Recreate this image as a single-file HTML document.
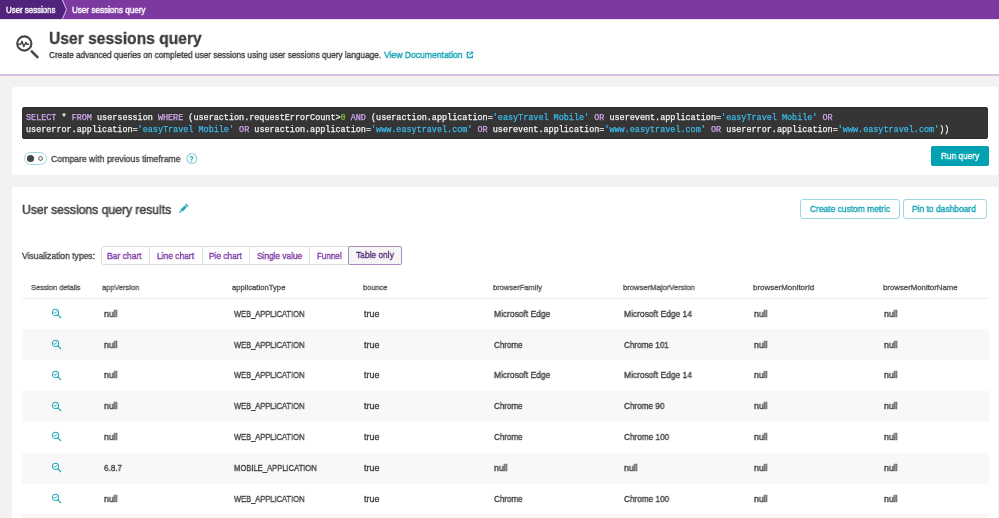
<!DOCTYPE html>
<html><head><meta charset="utf-8"><style>
html,body{margin:0;padding:0;}
body{width:999px;height:518px;overflow:hidden;position:relative;background:#f2f2f2;font-family:"Liberation Sans",sans-serif;}
.t{position:absolute;white-space:nowrap;transform-origin:0 0;will-change:transform;}
.m{position:absolute;white-space:pre;will-change:transform;font-family:"Liberation Mono",monospace;-webkit-text-stroke:0.25px currentColor;}
.b{position:absolute;}
</style></head><body>
<div class="b" style="left:0px;top:0px;width:999px;height:19px;background:#7c3aa0;"></div>
<svg class="b" style="left:0;top:0" width="80" height="19"><polygon points="0,0 62,0 66.5,9.5 62,19 0,19" fill="#52237a"/><polyline points="62,-1 66.5,9.5 62,20" fill="none" stroke="#d9c6e6" stroke-width="1"/></svg>
<div class="b" style="left:0px;top:19px;width:999px;height:55px;background:#fff;"></div>
<div class="b" style="left:0px;top:74px;width:999px;height:1.5px;background:#d9c3e3;"></div>
<div class="b" style="left:0px;top:19px;width:999px;height:1px;background:#ece3f2;"></div>
<div class="t" style="left:6.00px;top:3px;font-size:9.45px;line-height:14px;color:#fff;-webkit-text-stroke:0.45px #fff;transform:scaleX(0.8344);">User sessions</div>
<div class="t" style="left:71.50px;top:3px;font-size:9.45px;line-height:14px;color:#fff;-webkit-text-stroke:0.45px #fff;transform:scaleX(0.8588);">User sessions query</div>
<svg class="b" style="left:0;top:20px" width="50" height="50" viewBox="0 20 50 50">
<circle cx="24.3" cy="43.5" r="7.1" fill="none" stroke="#454646" stroke-width="2.1"/>
<polyline points="18.6,44.2 20.6,44.2 22,41.2 23.8,46.5 26,42.4 27,44.3 28.6,44.3" fill="none" stroke="#454646" stroke-width="1.45" stroke-linejoin="round" stroke-linecap="round"/>
<line x1="31" y1="50.6" x2="38.2" y2="57.8" stroke="#454646" stroke-width="2.5"/>
</svg>
<div class="t" style="left:48.60px;top:28px;font-size:16.86px;line-height:21px;color:#3b3b3b;font-weight:700;-webkit-text-stroke:0.3px #3b3b3b;transform:scaleX(0.9258);">User sessions query</div>
<div class="t" style="left:48.60px;top:48px;font-size:9.59px;line-height:14px;color:#3f3f3f;-webkit-text-stroke:0.4px #3f3f3f;transform:scaleX(0.8589);">Create advanced queries on completed user sessions using user sessions query language.</div>
<div class="t" style="left:384.30px;top:48px;font-size:9.59px;line-height:14px;color:#12a2b4;-webkit-text-stroke:0.4px #12a2b4;transform:scaleX(0.8963);">View Documentation</div>
<svg class="b" style="left:460px;top:46px" width="20" height="18" viewBox="460 46 20 18">
<path d="M469.6 52.4 H467.3 V57.5 H472.4 V55.2" fill="none" stroke="#1ea6b9" stroke-width="1.3"/>
<polygon points="470.2,51.6 473.2,51.6 473.2,54.6" fill="#1ea6b9"/>
<line x1="469.4" y1="55" x2="472" y2="52.4" stroke="#1ea6b9" stroke-width="1.2"/>
</svg>
<div class="b" style="left:12px;top:87px;width:986px;height:88px;background:#fff;border-radius:2px;"></div>
<div class="b" style="left:22px;top:106.8px;width:966.2px;height:32.2px;background:#353535;border:1px solid #2d2d2d;box-sizing:border-box;border-radius:2px;"></div>
<div class="m" style="left:25.6px;top:112.00px;font-size:8.465px;line-height:12px;"><span style="color:#cfa6ee;-webkit-text-stroke-color:#cfa6ee">SELECT</span><span style="color:#f2f2f2;-webkit-text-stroke-color:#f2f2f2"> * </span><span style="color:#cfa6ee;-webkit-text-stroke-color:#cfa6ee">FROM</span><span style="color:#f2f2f2;-webkit-text-stroke-color:#f2f2f2"> usersession </span><span style="color:#cfa6ee;-webkit-text-stroke-color:#cfa6ee">WHERE</span><span style="color:#f2f2f2;-webkit-text-stroke-color:#f2f2f2"> (useraction.requestErrorCount&gt;</span><span style="color:#7dc540;-webkit-text-stroke-color:#7dc540">0</span><span style="color:#f2f2f2;-webkit-text-stroke-color:#f2f2f2"> </span><span style="color:#cfa6ee;-webkit-text-stroke-color:#cfa6ee">AND</span><span style="color:#f2f2f2;-webkit-text-stroke-color:#f2f2f2"> (useraction.application=</span><span style="color:#3cb8ea;-webkit-text-stroke-color:#3cb8ea">'easyTravel Mobile'</span><span style="color:#f2f2f2;-webkit-text-stroke-color:#f2f2f2"> </span><span style="color:#cfa6ee;-webkit-text-stroke-color:#cfa6ee">OR</span><span style="color:#f2f2f2;-webkit-text-stroke-color:#f2f2f2"> userevent.application=</span><span style="color:#3cb8ea;-webkit-text-stroke-color:#3cb8ea">'easyTravel Mobile'</span><span style="color:#f2f2f2;-webkit-text-stroke-color:#f2f2f2"> </span><span style="color:#cfa6ee;-webkit-text-stroke-color:#cfa6ee">OR</span></div>
<div class="m" style="left:25.6px;top:124.00px;font-size:8.465px;line-height:12px;"><span style="color:#f2f2f2;-webkit-text-stroke-color:#f2f2f2">usererror.application=</span><span style="color:#3cb8ea;-webkit-text-stroke-color:#3cb8ea">'easyTravel Mobile'</span><span style="color:#f2f2f2;-webkit-text-stroke-color:#f2f2f2"> </span><span style="color:#cfa6ee;-webkit-text-stroke-color:#cfa6ee">OR</span><span style="color:#f2f2f2;-webkit-text-stroke-color:#f2f2f2"> useraction.application=</span><span style="color:#3cb8ea;-webkit-text-stroke-color:#3cb8ea">'www.easytravel.com'</span><span style="color:#f2f2f2;-webkit-text-stroke-color:#f2f2f2"> </span><span style="color:#cfa6ee;-webkit-text-stroke-color:#cfa6ee">OR</span><span style="color:#f2f2f2;-webkit-text-stroke-color:#f2f2f2"> userevent.application=</span><span style="color:#3cb8ea;-webkit-text-stroke-color:#3cb8ea">'www.easytravel.com'</span><span style="color:#f2f2f2;-webkit-text-stroke-color:#f2f2f2"> </span><span style="color:#cfa6ee;-webkit-text-stroke-color:#cfa6ee">OR</span><span style="color:#f2f2f2;-webkit-text-stroke-color:#f2f2f2"> usererror.application=</span><span style="color:#3cb8ea;-webkit-text-stroke-color:#3cb8ea">'www.easytravel.com'</span><span style="color:#f2f2f2;-webkit-text-stroke-color:#f2f2f2">))</span></div>
<svg class="b" style="left:23px;top:151px" width="25" height="15" viewBox="0 0 25 15">
<rect x="1.5" y="1.5" width="22" height="12" rx="6" fill="#fff" stroke="#9bd8e0" stroke-width="1"/>
<circle cx="7.5" cy="7.5" r="3.6" fill="#454646"/>
<circle cx="17.6" cy="7.5" r="1.9" fill="none" stroke="#454646" stroke-width="0.9"/>
</svg>
<div class="t" style="left:51.00px;top:152px;font-size:9.30px;line-height:14px;color:#454646;-webkit-text-stroke:0.35px #454646;transform:scaleX(0.9320);">Compare with previous timeframe</div>
<svg class="b" style="left:185px;top:152px" width="14" height="14" viewBox="0 0 14 14">
<circle cx="6.8" cy="6.6" r="4.9" fill="#fff" stroke="#8fd2dc" stroke-width="1.2"/>
</svg>
<div class="t" style="left:189.30px;top:152px;font-size:9.30px;line-height:14px;color:#12a2b4;font-weight:700;transform:scaleX(0.8448);">?</div>
<div class="b" style="left:931px;top:146px;width:58px;height:20px;background:#00a1b2;border-radius:2px;"></div>
<div class="t" style="left:940.80px;top:149px;font-size:9.16px;line-height:14px;color:#fff;-webkit-text-stroke:0.35px #fff;transform:scaleX(0.9042);">Run query</div>
<div class="b" style="left:12px;top:187px;width:986px;height:353px;background:#fff;border-radius:2px;"></div>
<div class="t" style="left:22.40px;top:202px;font-size:12.65px;line-height:17px;color:#454646;-webkit-text-stroke:0.55px #454646;transform:scaleX(0.9607);">User sessions query results</div>
<svg class="b" style="left:170px;top:195px" width="25" height="25" viewBox="170 195 25 25">
<g transform="translate(179.2,212.8) rotate(-44.5)" fill="#1ea6b9">
<polygon points="0,0 2.2,-1.4 2.2,1.4"/>
<rect x="2.9" y="-1.4" width="6.2" height="2.8"/>
<rect x="9.8" y="-1.4" width="1.7" height="2.8"/>
</g>
</svg>
<div class="b" style="left:800px;top:199px;width:100px;height:20px;background:#fff;border:1px solid #9bd8e0;border-radius:3px;box-sizing:border-box;"></div>
<div class="b" style="left:903px;top:199px;width:83.5px;height:20px;background:#fff;border:1px solid #9bd8e0;border-radius:3px;box-sizing:border-box;"></div>
<div class="t" style="left:809.90px;top:202px;font-size:9.16px;line-height:14px;color:#12a2b4;-webkit-text-stroke:0.35px #12a2b4;transform:scaleX(0.9206);">Create custom metric</div>
<div class="t" style="left:912.40px;top:202px;font-size:9.16px;line-height:14px;color:#12a2b4;-webkit-text-stroke:0.35px #12a2b4;transform:scaleX(0.9216);">Pin to dashboard</div>
<div class="t" style="left:22.00px;top:249px;font-size:9.16px;line-height:14px;color:#454646;-webkit-text-stroke:0.35px #454646;transform:scaleX(0.9333);">Visualization types:</div>
<div class="b" style="left:100.6px;top:245.5px;width:301.0px;height:19.100000000000023px;background:#fff;border:1px solid #dcdcdc;border-radius:3px;box-sizing:border-box;"></div>
<div class="b" style="left:149.4px;top:246px;width:1.0px;height:18.5px;background:#e2e2e2;"></div>
<div class="b" style="left:201.5px;top:246px;width:1.0px;height:18.5px;background:#e2e2e2;"></div>
<div class="b" style="left:249.4px;top:246px;width:1.0px;height:18.5px;background:#e2e2e2;"></div>
<div class="b" style="left:309.3px;top:246px;width:1.0px;height:18.5px;background:#e2e2e2;"></div>
<div class="b" style="left:348.2px;top:245.5px;width:53.400000000000034px;height:19.100000000000023px;background:#f5f5f5;border:1px solid #a98cc0;border-radius:2px;box-sizing:border-box;"></div>
<div class="t" style="left:107.40px;top:249px;font-size:9.16px;line-height:14px;color:#7c38a1;-webkit-text-stroke:0.35px #7c38a1;transform:scaleX(0.9314);">Bar chart</div>
<div class="t" style="left:156.60px;top:249px;font-size:9.16px;line-height:14px;color:#7c38a1;-webkit-text-stroke:0.35px #7c38a1;transform:scaleX(0.9202);">Line chart</div>
<div class="t" style="left:208.80px;top:249px;font-size:9.16px;line-height:14px;color:#7c38a1;-webkit-text-stroke:0.35px #7c38a1;transform:scaleX(0.9077);">Pie chart</div>
<div class="t" style="left:256.80px;top:249px;font-size:9.16px;line-height:14px;color:#7c38a1;-webkit-text-stroke:0.35px #7c38a1;transform:scaleX(0.9060);">Single value</div>
<div class="t" style="left:316.70px;top:249px;font-size:9.16px;line-height:14px;color:#7c38a1;-webkit-text-stroke:0.35px #7c38a1;transform:scaleX(0.8787);">Funnel</div>
<div class="t" style="left:356.30px;top:248px;font-size:9.16px;line-height:14px;color:#552a78;-webkit-text-stroke:0.35px #552a78;transform:scaleX(0.9168);">Table only</div>
<div class="t" style="left:31.00px;top:282px;font-size:7.70px;line-height:12px;color:#555555;-webkit-text-stroke:0.32px #555555;transform:scaleX(0.9573);">Session details</div>
<div class="t" style="left:101.90px;top:282px;font-size:7.70px;line-height:12px;color:#555555;-webkit-text-stroke:0.32px #555555;transform:scaleX(0.9651);">appVersion</div>
<div class="t" style="left:232.00px;top:282px;font-size:7.70px;line-height:12px;color:#555555;-webkit-text-stroke:0.32px #555555;transform:scaleX(0.9994);">applicationType</div>
<div class="t" style="left:362.60px;top:282px;font-size:7.70px;line-height:12px;color:#555555;-webkit-text-stroke:0.32px #555555;transform:scaleX(0.9655);">bounce</div>
<div class="t" style="left:492.70px;top:282px;font-size:7.70px;line-height:12px;color:#555555;-webkit-text-stroke:0.32px #555555;transform:scaleX(0.9785);">browserFamily</div>
<div class="t" style="left:622.80px;top:282px;font-size:7.70px;line-height:12px;color:#555555;-webkit-text-stroke:0.32px #555555;transform:scaleX(0.9924);">browserMajorVersion</div>
<div class="t" style="left:752.70px;top:282px;font-size:7.70px;line-height:12px;color:#555555;-webkit-text-stroke:0.32px #555555;transform:scaleX(1.0318);">browserMonitorId</div>
<div class="t" style="left:882.70px;top:282px;font-size:7.70px;line-height:12px;color:#555555;-webkit-text-stroke:0.32px #555555;transform:scaleX(1.0145);">browserMonitorName</div>
<div class="b" style="left:21.5px;top:298px;width:967.0px;height:1px;background:#eeeeee;"></div>
<div class="t" style="left:103.60px;top:308px;font-size:8.87px;line-height:13px;color:#404040;-webkit-text-stroke:0.35px #404040;transform:scaleX(0.9709);">null</div>
<div class="t" style="left:233.60px;top:308px;font-size:8.87px;line-height:13px;color:#404040;-webkit-text-stroke:0.35px #404040;transform:scaleX(0.8484);">WEB_APPLICATION</div>
<div class="t" style="left:363.60px;top:308px;font-size:8.87px;line-height:13px;color:#404040;-webkit-text-stroke:0.35px #404040;transform:scaleX(1.0081);">true</div>
<div class="t" style="left:493.70px;top:308px;font-size:8.87px;line-height:13px;color:#404040;-webkit-text-stroke:0.35px #404040;transform:scaleX(0.9505);">Microsoft Edge</div>
<div class="t" style="left:623.70px;top:308px;font-size:8.87px;line-height:13px;color:#404040;-webkit-text-stroke:0.35px #404040;transform:scaleX(0.9503);">Microsoft Edge 14</div>
<div class="t" style="left:753.80px;top:308px;font-size:8.87px;line-height:13px;color:#404040;-webkit-text-stroke:0.35px #404040;transform:scaleX(0.9709);">null</div>
<div class="t" style="left:883.50px;top:308px;font-size:8.87px;line-height:13px;color:#404040;-webkit-text-stroke:0.35px #404040;transform:scaleX(0.9709);">null</div>
<svg class="b" style="left:50px;top:307.00px" width="14" height="14" viewBox="0 0 14 14">
<circle cx="5.5" cy="5.4" r="3.1" fill="none" stroke="#22a8ba" stroke-width="1.05"/>
<polyline points="3.7,5.2 4.9,6.5 6.9,4.3" fill="none" stroke="#1ea6b9" stroke-width="0.95"/>
<line x1="7.7" y1="7.7" x2="11.1" y2="11.1" stroke="#1ea6b9" stroke-width="1.2"/>
</svg>
<div class="b" style="left:21.5px;top:329.35px;width:967.0px;height:30.849999999999966px;background:#f8f8f8;"></div>
<div class="t" style="left:103.60px;top:339px;font-size:8.87px;line-height:13px;color:#404040;-webkit-text-stroke:0.35px #404040;transform:scaleX(0.9709);">null</div>
<div class="t" style="left:233.60px;top:339px;font-size:8.87px;line-height:13px;color:#404040;-webkit-text-stroke:0.35px #404040;transform:scaleX(0.8484);">WEB_APPLICATION</div>
<div class="t" style="left:363.60px;top:339px;font-size:8.87px;line-height:13px;color:#404040;-webkit-text-stroke:0.35px #404040;transform:scaleX(1.0081);">true</div>
<div class="t" style="left:493.70px;top:339px;font-size:8.87px;line-height:13px;color:#404040;-webkit-text-stroke:0.35px #404040;transform:scaleX(0.9070);">Chrome</div>
<div class="t" style="left:623.70px;top:339px;font-size:8.87px;line-height:13px;color:#404040;-webkit-text-stroke:0.35px #404040;transform:scaleX(0.9203);">Chrome 101</div>
<div class="t" style="left:753.80px;top:339px;font-size:8.87px;line-height:13px;color:#404040;-webkit-text-stroke:0.35px #404040;transform:scaleX(0.9709);">null</div>
<div class="t" style="left:883.50px;top:339px;font-size:8.87px;line-height:13px;color:#404040;-webkit-text-stroke:0.35px #404040;transform:scaleX(0.9709);">null</div>
<svg class="b" style="left:50px;top:337.85px" width="14" height="14" viewBox="0 0 14 14">
<circle cx="5.5" cy="5.4" r="3.1" fill="none" stroke="#22a8ba" stroke-width="1.05"/>
<polyline points="3.7,5.2 4.9,6.5 6.9,4.3" fill="none" stroke="#1ea6b9" stroke-width="0.95"/>
<line x1="7.7" y1="7.7" x2="11.1" y2="11.1" stroke="#1ea6b9" stroke-width="1.2"/>
</svg>
<div class="t" style="left:103.60px;top:369px;font-size:8.87px;line-height:13px;color:#404040;-webkit-text-stroke:0.35px #404040;transform:scaleX(0.9709);">null</div>
<div class="t" style="left:233.60px;top:369px;font-size:8.87px;line-height:13px;color:#404040;-webkit-text-stroke:0.35px #404040;transform:scaleX(0.8484);">WEB_APPLICATION</div>
<div class="t" style="left:363.60px;top:369px;font-size:8.87px;line-height:13px;color:#404040;-webkit-text-stroke:0.35px #404040;transform:scaleX(1.0081);">true</div>
<div class="t" style="left:493.70px;top:369px;font-size:8.87px;line-height:13px;color:#404040;-webkit-text-stroke:0.35px #404040;transform:scaleX(0.9505);">Microsoft Edge</div>
<div class="t" style="left:623.70px;top:369px;font-size:8.87px;line-height:13px;color:#404040;-webkit-text-stroke:0.35px #404040;transform:scaleX(0.9503);">Microsoft Edge 14</div>
<div class="t" style="left:753.80px;top:369px;font-size:8.87px;line-height:13px;color:#404040;-webkit-text-stroke:0.35px #404040;transform:scaleX(0.9709);">null</div>
<div class="t" style="left:883.50px;top:369px;font-size:8.87px;line-height:13px;color:#404040;-webkit-text-stroke:0.35px #404040;transform:scaleX(0.9709);">null</div>
<svg class="b" style="left:50px;top:368.70px" width="14" height="14" viewBox="0 0 14 14">
<circle cx="5.5" cy="5.4" r="3.1" fill="none" stroke="#22a8ba" stroke-width="1.05"/>
<polyline points="3.7,5.2 4.9,6.5 6.9,4.3" fill="none" stroke="#1ea6b9" stroke-width="0.95"/>
<line x1="7.7" y1="7.7" x2="11.1" y2="11.1" stroke="#1ea6b9" stroke-width="1.2"/>
</svg>
<div class="b" style="left:21.5px;top:391.05px;width:967.0px;height:30.849999999999966px;background:#f8f8f8;"></div>
<div class="t" style="left:103.60px;top:400px;font-size:8.87px;line-height:13px;color:#404040;-webkit-text-stroke:0.35px #404040;transform:scaleX(0.9709);">null</div>
<div class="t" style="left:233.60px;top:400px;font-size:8.87px;line-height:13px;color:#404040;-webkit-text-stroke:0.35px #404040;transform:scaleX(0.8484);">WEB_APPLICATION</div>
<div class="t" style="left:363.60px;top:400px;font-size:8.87px;line-height:13px;color:#404040;-webkit-text-stroke:0.35px #404040;transform:scaleX(1.0081);">true</div>
<div class="t" style="left:493.70px;top:400px;font-size:8.87px;line-height:13px;color:#404040;-webkit-text-stroke:0.35px #404040;transform:scaleX(0.9070);">Chrome</div>
<div class="t" style="left:623.70px;top:400px;font-size:8.87px;line-height:13px;color:#404040;-webkit-text-stroke:0.35px #404040;transform:scaleX(0.9212);">Chrome 90</div>
<div class="t" style="left:753.80px;top:400px;font-size:8.87px;line-height:13px;color:#404040;-webkit-text-stroke:0.35px #404040;transform:scaleX(0.9709);">null</div>
<div class="t" style="left:883.50px;top:400px;font-size:8.87px;line-height:13px;color:#404040;-webkit-text-stroke:0.35px #404040;transform:scaleX(0.9709);">null</div>
<svg class="b" style="left:50px;top:399.55px" width="14" height="14" viewBox="0 0 14 14">
<circle cx="5.5" cy="5.4" r="3.1" fill="none" stroke="#22a8ba" stroke-width="1.05"/>
<polyline points="3.7,5.2 4.9,6.5 6.9,4.3" fill="none" stroke="#1ea6b9" stroke-width="0.95"/>
<line x1="7.7" y1="7.7" x2="11.1" y2="11.1" stroke="#1ea6b9" stroke-width="1.2"/>
</svg>
<div class="t" style="left:103.60px;top:431px;font-size:8.87px;line-height:13px;color:#404040;-webkit-text-stroke:0.35px #404040;transform:scaleX(0.9709);">null</div>
<div class="t" style="left:233.60px;top:431px;font-size:8.87px;line-height:13px;color:#404040;-webkit-text-stroke:0.35px #404040;transform:scaleX(0.8484);">WEB_APPLICATION</div>
<div class="t" style="left:363.60px;top:431px;font-size:8.87px;line-height:13px;color:#404040;-webkit-text-stroke:0.35px #404040;transform:scaleX(1.0081);">true</div>
<div class="t" style="left:493.70px;top:431px;font-size:8.87px;line-height:13px;color:#404040;-webkit-text-stroke:0.35px #404040;transform:scaleX(0.9070);">Chrome</div>
<div class="t" style="left:623.70px;top:431px;font-size:8.87px;line-height:13px;color:#404040;-webkit-text-stroke:0.35px #404040;transform:scaleX(0.9265);">Chrome 100</div>
<div class="t" style="left:753.80px;top:431px;font-size:8.87px;line-height:13px;color:#404040;-webkit-text-stroke:0.35px #404040;transform:scaleX(0.9709);">null</div>
<div class="t" style="left:883.50px;top:431px;font-size:8.87px;line-height:13px;color:#404040;-webkit-text-stroke:0.35px #404040;transform:scaleX(0.9709);">null</div>
<svg class="b" style="left:50px;top:430.40px" width="14" height="14" viewBox="0 0 14 14">
<circle cx="5.5" cy="5.4" r="3.1" fill="none" stroke="#22a8ba" stroke-width="1.05"/>
<polyline points="3.7,5.2 4.9,6.5 6.9,4.3" fill="none" stroke="#1ea6b9" stroke-width="0.95"/>
<line x1="7.7" y1="7.7" x2="11.1" y2="11.1" stroke="#1ea6b9" stroke-width="1.2"/>
</svg>
<div class="b" style="left:21.5px;top:452.75px;width:967.0px;height:30.850000000000023px;background:#f8f8f8;"></div>
<div class="t" style="left:103.60px;top:462px;font-size:8.87px;line-height:13px;color:#404040;-webkit-text-stroke:0.35px #404040;transform:scaleX(0.9078);">6.8.7</div>
<div class="t" style="left:233.60px;top:462px;font-size:8.87px;line-height:13px;color:#404040;-webkit-text-stroke:0.35px #404040;transform:scaleX(0.8589);">MOBILE_APPLICATION</div>
<div class="t" style="left:363.60px;top:462px;font-size:8.87px;line-height:13px;color:#404040;-webkit-text-stroke:0.35px #404040;transform:scaleX(1.0081);">true</div>
<div class="t" style="left:493.70px;top:462px;font-size:8.87px;line-height:13px;color:#404040;-webkit-text-stroke:0.35px #404040;transform:scaleX(0.9709);">null</div>
<div class="t" style="left:623.70px;top:462px;font-size:8.87px;line-height:13px;color:#404040;-webkit-text-stroke:0.35px #404040;transform:scaleX(0.9709);">null</div>
<div class="t" style="left:753.80px;top:462px;font-size:8.87px;line-height:13px;color:#404040;-webkit-text-stroke:0.35px #404040;transform:scaleX(0.9709);">null</div>
<div class="t" style="left:883.50px;top:462px;font-size:8.87px;line-height:13px;color:#404040;-webkit-text-stroke:0.35px #404040;transform:scaleX(0.9709);">null</div>
<svg class="b" style="left:50px;top:461.25px" width="14" height="14" viewBox="0 0 14 14">
<circle cx="5.5" cy="5.4" r="3.1" fill="none" stroke="#22a8ba" stroke-width="1.05"/>
<polyline points="3.7,5.2 4.9,6.5 6.9,4.3" fill="none" stroke="#1ea6b9" stroke-width="0.95"/>
<line x1="7.7" y1="7.7" x2="11.1" y2="11.1" stroke="#1ea6b9" stroke-width="1.2"/>
</svg>
<div class="t" style="left:103.60px;top:493px;font-size:8.87px;line-height:13px;color:#404040;-webkit-text-stroke:0.35px #404040;transform:scaleX(0.9709);">null</div>
<div class="t" style="left:233.60px;top:493px;font-size:8.87px;line-height:13px;color:#404040;-webkit-text-stroke:0.35px #404040;transform:scaleX(0.8484);">WEB_APPLICATION</div>
<div class="t" style="left:363.60px;top:493px;font-size:8.87px;line-height:13px;color:#404040;-webkit-text-stroke:0.35px #404040;transform:scaleX(1.0081);">true</div>
<div class="t" style="left:493.70px;top:493px;font-size:8.87px;line-height:13px;color:#404040;-webkit-text-stroke:0.35px #404040;transform:scaleX(0.9070);">Chrome</div>
<div class="t" style="left:623.70px;top:493px;font-size:8.87px;line-height:13px;color:#404040;-webkit-text-stroke:0.35px #404040;transform:scaleX(0.9265);">Chrome 100</div>
<div class="t" style="left:753.80px;top:493px;font-size:8.87px;line-height:13px;color:#404040;-webkit-text-stroke:0.35px #404040;transform:scaleX(0.9709);">null</div>
<div class="t" style="left:883.50px;top:493px;font-size:8.87px;line-height:13px;color:#404040;-webkit-text-stroke:0.35px #404040;transform:scaleX(0.9709);">null</div>
<svg class="b" style="left:50px;top:492.10px" width="14" height="14" viewBox="0 0 14 14">
<circle cx="5.5" cy="5.4" r="3.1" fill="none" stroke="#22a8ba" stroke-width="1.05"/>
<polyline points="3.7,5.2 4.9,6.5 6.9,4.3" fill="none" stroke="#1ea6b9" stroke-width="0.95"/>
<line x1="7.7" y1="7.7" x2="11.1" y2="11.1" stroke="#1ea6b9" stroke-width="1.2"/>
</svg>
<div class="b" style="left:21.5px;top:514.45px;width:967.0px;height:30.84999999999991px;background:#f8f8f8;"></div>
<div class="t" style="left:103.60px;top:524px;font-size:8.87px;line-height:13px;color:#404040;-webkit-text-stroke:0.35px #404040;transform:scaleX(0.9709);">null</div>
<div class="t" style="left:233.60px;top:524px;font-size:8.87px;line-height:13px;color:#404040;-webkit-text-stroke:0.35px #404040;transform:scaleX(0.8484);">WEB_APPLICATION</div>
<div class="t" style="left:363.60px;top:524px;font-size:8.87px;line-height:13px;color:#404040;-webkit-text-stroke:0.35px #404040;transform:scaleX(1.0081);">true</div>
<div class="t" style="left:493.70px;top:524px;font-size:8.87px;line-height:13px;color:#404040;-webkit-text-stroke:0.35px #404040;transform:scaleX(0.9070);">Chrome</div>
<div class="t" style="left:623.70px;top:524px;font-size:8.87px;line-height:13px;color:#404040;-webkit-text-stroke:0.35px #404040;transform:scaleX(0.9265);">Chrome 100</div>
<div class="t" style="left:753.80px;top:524px;font-size:8.87px;line-height:13px;color:#404040;-webkit-text-stroke:0.35px #404040;transform:scaleX(0.9709);">null</div>
<div class="t" style="left:883.50px;top:524px;font-size:8.87px;line-height:13px;color:#404040;-webkit-text-stroke:0.35px #404040;transform:scaleX(0.9709);">null</div>
<svg class="b" style="left:50px;top:522.95px" width="14" height="14" viewBox="0 0 14 14">
<circle cx="5.5" cy="5.4" r="3.1" fill="none" stroke="#22a8ba" stroke-width="1.05"/>
<polyline points="3.7,5.2 4.9,6.5 6.9,4.3" fill="none" stroke="#1ea6b9" stroke-width="0.95"/>
<line x1="7.7" y1="7.7" x2="11.1" y2="11.1" stroke="#1ea6b9" stroke-width="1.2"/>
</svg>
</body></html>
